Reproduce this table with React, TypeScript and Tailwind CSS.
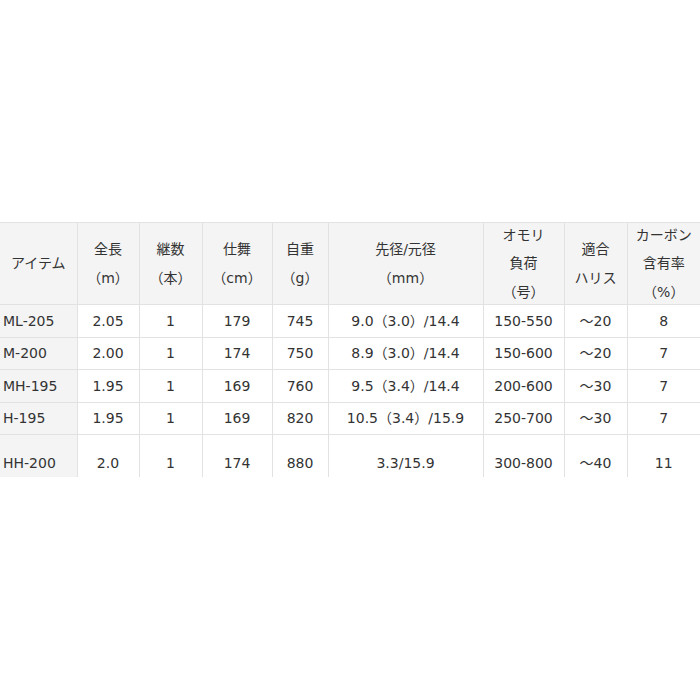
const COLS = [77, 62, 63, 70, 56, 155, 81, 63, 73];

const HEADERS: string[][] = [
  ["アイテム"],
  ["全長", "（m）"],
  ["継数", "（本）"],
  ["仕舞", "（cm）"],
  ["自重", "（g）"],
  ["先径/元径", "（mm）"],
  ["オモリ", "負荷", "（号）"],
  ["適合", "ハリス"],
  ["カーボン", "含有率", "（%）"],
];

const ROWS: { h: string; cells: string[] }[] = [
  { h: "h-[33px]", cells: ["ML-205", "2.05", "1", "179", "745", "9.0（3.0）/14.4", "150-550", "～20", "8"] },
  { h: "h-[32px]", cells: ["M-200", "2.00", "1", "174", "750", "8.9（3.0）/14.4", "150-600", "～20", "7"] },
  { h: "h-[33px]", cells: ["MH-195", "1.95", "1", "169", "760", "9.5（3.4）/14.4", "200-600", "～30", "7"] },
  { h: "h-[32px]", cells: ["H-195", "1.95", "1", "169", "820", "10.5（3.4）/15.9", "250-700", "～30", "7"] },
  { h: "h-[58px]", cells: ["HH-200", "2.0", "1", "174", "880", "3.3/15.9", "300-800", "～40", "11"] },
];

export default function App() {
  return (
    <div
      className="w-[700px] h-[700px] bg-white pt-[222px] text-[14px] text-[#333]"
      style={{ fontFamily: '"DejaVu Sans", "Noto Sans CJK JP", sans-serif' }}
    >
      <div className="h-[255px] overflow-hidden">
        <table className="w-[700px] table-fixed border-collapse">
          <colgroup>
            {COLS.map((w, i) => (
              <col key={i} style={{ width: w }} />
            ))}
          </colgroup>
          <thead>
            <tr className="bg-[#f4f4f4]">
              {HEADERS.map((lines, i) => (
                <th
                  key={i}
                  className={`p-0 font-normal text-center align-middle border-[#e2e2e2] border-t ${
                    i > 0 ? "border-l" : ""
                  }`}
                >
                  <div className="h-[81px] flex flex-col justify-center leading-[28.5px]">
                    {lines.map((l, j) => (
                      <div key={j}>{l}</div>
                    ))}
                  </div>
                </th>
              ))}
            </tr>
          </thead>
          <tbody>
            {ROWS.map((row, r) => (
              <tr key={r} className={row.h}>
                {row.cells.map((c, i) => (
                  <td
                    key={i}
                    className={`p-0 align-middle whitespace-nowrap border-t border-[#e2e2e2] ${
                      i > 0 ? "border-l text-center bg-white" : "text-left pl-[3px] bg-[#f4f4f4]"
                    }`}
                  >
                    {c}
                  </td>
                ))}
              </tr>
            ))}
          </tbody>
        </table>
      </div>
    </div>
  );
}
